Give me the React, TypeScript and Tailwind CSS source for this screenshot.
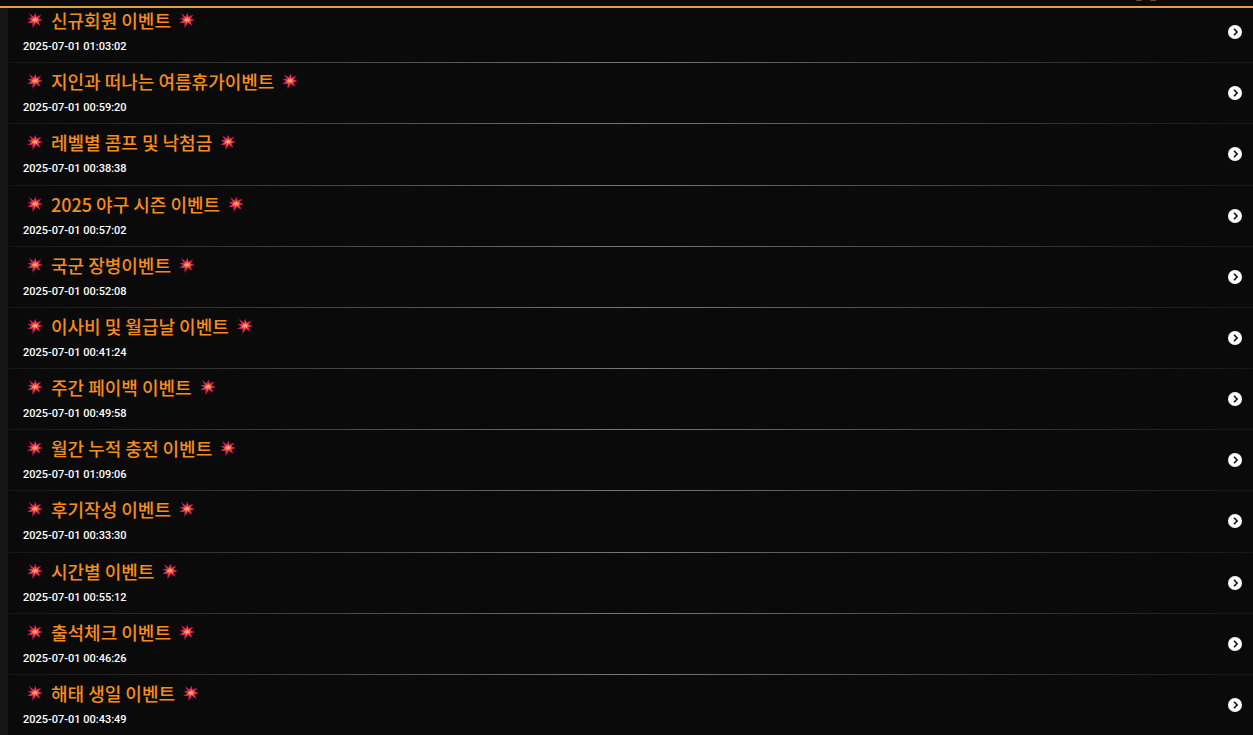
const events = [
  { title: "신규회원 이벤트", date: "2025-07-01 01:03:02" },
  { title: "지인과 떠나는 여름휴가이벤트", date: "2025-07-01 00:59:20" },
  { title: "레벨별 콤프 및 낙첨금", date: "2025-07-01 00:38:38" },
  { title: "2025 야구 시즌 이벤트", date: "2025-07-01 00:57:02" },
  { title: "국군 장병이벤트", date: "2025-07-01 00:52:08" },
  { title: "이사비 및 월급날 이벤트", date: "2025-07-01 00:41:24" },
  { title: "주간 페이백 이벤트", date: "2025-07-01 00:49:58" },
  { title: "월간 누적 충전 이벤트", date: "2025-07-01 01:09:06" },
  { title: "후기작성 이벤트", date: "2025-07-01 00:33:30" },
  { title: "시간별 이벤트", date: "2025-07-01 00:55:12" },
  { title: "출석체크 이벤트", date: "2025-07-01 00:46:26" },
  { title: "해태 생일 이벤트", date: "2025-07-01 00:43:49" },
];

/** Small burst shown on both sides of a title. */
function Burst() {
  return (
    <svg viewBox="0 0 32 32" className="size-4 shrink-0" aria-hidden="true">
      <path
        fill="#c2185b"
        d="M4 2 L13 9 L17 1 L19 9 L29 5 L23 13 L32 16 L23 19 L27 28 L18 22 L11 32 L11 22 L0 22 L8 17 L1 12 L9 12 Z"
      />
      <path
        fill="#ea3448"
        d="M8 6 L14 11 L17 5 L19 11 L26 8 L22 14 L29 16 L22 18 L24 25 L17 20 L12 28 L12 20 L4 21 L10 16 L5 13 L12 13 Z"
      />
      <path
        fill="#ff9a4d"
        d="M12 10 L15 13 L17 9 L18 13 L23 11 L20 15 L25 16 L20 17 L21 21 L17 18 L14 22 L14 18 L8 19 L12 16 L9 14 L13 14 Z"
      />
      <circle cx="16.5" cy="15.5" r="2" fill="#ffc477" />
    </svg>
  );
}

function ArrowCircle() {
  return (
    <svg viewBox="0 0 14 14" className="size-3.5 shrink-0" aria-hidden="true">
      <circle cx="7" cy="7" r="7" fill="#fff" />
      <path d="M6 3.8 L9.1 7 L6 10.2" fill="none" stroke="#0b0b0b" strokeWidth="1.6" />
    </svg>
  );
}

function EventRow({ title, date }: { title: string; date: string }) {
  return (
    <li className="flex flex-col">
      <a href="#" className="flex flex-1 items-center justify-between pr-[11px] pl-3.5">
        <div className="pt-1">
          <h2 className="flex items-center gap-2 pl-1 font-['Noto_Sans_CJK_KR',sans-serif] text-[18px] leading-[26px] font-medium text-[#f68c1c]">
            <Burst />
            {title}
            <Burst />
          </h2>
          <time className="block font-[Roboto,sans-serif] text-[11px] leading-[28px] font-medium text-white">
            {date}
          </time>
        </div>
        <ArrowCircle />
      </a>
      <div className="h-px bg-linear-to-r from-[#161616] via-[#787878] to-[#161616]" />
    </li>
  );
}

export default function App() {
  return (
    <div className="min-h-screen bg-[#0a0a0a]">
      <header className="fixed inset-x-0 top-0 z-10 flex h-2 justify-end border-b-2 border-[#d9a53c] bg-[#0a0a0a] pr-[97px]">
        <div className="flex h-px gap-2" aria-hidden="true">
          <span className="w-1.5 rounded-b bg-[#6b4a38]" />
          <span className="w-1.5 rounded-b bg-[#6b4a38]" />
        </div>
      </header>
      <main className="flex min-h-screen overflow-hidden">
        <div className="w-2 shrink-0 bg-[#151515]" />
        <ul className="-mb-px grid flex-1 auto-rows-fr pt-0.5 pl-px">
          {events.map((event) => (
            <EventRow key={event.title} title={event.title} date={event.date} />
          ))}
        </ul>
      </main>
    </div>
  );
}
